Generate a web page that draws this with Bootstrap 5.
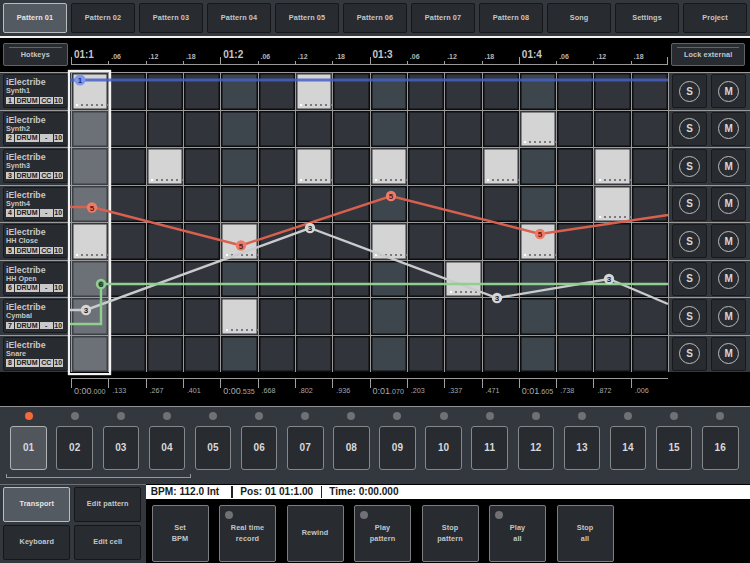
<!DOCTYPE html>
<html lang="en"><head><meta charset="utf-8"><title>Sequencer</title>
<link href="https://cdn.jsdelivr.net/npm/bootstrap@5.3.0/dist/css/bootstrap.min.css" rel="stylesheet">
<style>
html,body{margin:0;width:750px;height:563px;overflow:hidden;background:#000;font-family:"Liberation Sans",Arial,sans-serif}
.app{width:750px;height:563px;overflow:hidden}
.hw{--bs-btn-padding-x:0;--bs-btn-padding-y:0;--bs-btn-font-size:7.3px;--bs-btn-font-weight:700;--bs-btn-line-height:10.5px;--bs-btn-color:#c4c6c8;--bs-btn-bg:#282b30;--bs-btn-border-color:#15171a;--bs-btn-border-radius:2px;--bs-btn-hover-color:#c4c6c8;--bs-btn-hover-bg:#282b30;--bs-btn-hover-border-color:#15171a;letter-spacing:.1px}
.hw.lit{--bs-btn-color:#e6e6e6;--bs-btn-bg:#545a61;--bs-btn-border-color:#b9bcbf;--bs-btn-hover-bg:#545a61;--bs-btn-hover-border-color:#b9bcbf;--bs-btn-hover-color:#e6e6e6}
.tabs{height:36px;background:#33373e;padding:3px;gap:4px}
.tabs .hw{width:64px;height:30px}
.wline{height:2px;background:#f2f2f2}
.trk{display:grid;grid-template-columns:70.9px repeat(16,37.34px) 81.66px}
.rul{height:34px;background:#000}
.tk{height:27px;border-bottom:1px solid #9a9a9a;align-self:start;color:#b5b5b5;font-size:7px;font-weight:700;padding:14px 0 0 3px;line-height:9px;position:relative}
.tk.maj{font-size:10px;color:#c6c6c6;padding-top:11px;padding-left:3px;line-height:11px}
.tk::before{content:"";position:absolute;left:0;bottom:0;height:3px;width:1px;background:#a0a0a0}
.tk.maj::before{height:7px}
.tk.end::after{content:"";position:absolute;right:0;bottom:0;height:7px;width:1px;background:#a0a0a0}
.holdb{padding:4px 0 0 3px}
.holdb .hw{width:64.5px;height:23px;position:relative}
.holdl{padding:4px 0 0 3px}
.holdl .hw{width:74px;height:23px;position:relative}
.hw .gl{position:absolute;left:5px;right:5px;top:3px;height:1px;background:#62666b}
.hw.slim{--bs-btn-border-color:#5f6368;--bs-btn-hover-border-color:#5f6368}
.lane{height:37.5px;border-top:1px solid #9a9a9a;background:#33373e}
.tcard{padding:1px 3px}
.tbox{height:34px;background:#282b30;border:1px solid #17191c;border-radius:2px;padding:2px 0 0 2px;color:#c4c6c8;font-weight:700;line-height:1}
.tname{font-size:8.8px;line-height:10px}
.tsub{font-size:7.2px;line-height:8.5px}
.tags{gap:1px;margin-top:1px}
.tags span{background:#c9c9c9;color:#1b1b1b;font-size:7px;height:7.5px;line-height:7.6px;text-align:center;display:block}
.t1{width:8px}.t2{width:24px}.t3{width:12.5px}.t4{width:9.5px}
.cel{border-left:1px solid #9a9a9a;box-shadow:inset 0 0 0 1.5px #0c0d0f;background:#31343a;position:relative}
.cel.beat{background:#3d454d}
.cel.sel{background:#6c7178;box-shadow:inset 0 0 0 1.5px #3c3f43}
.cel.on{background:#d4d4d4;box-shadow:inset 0 0 0 1.5px #35373b}
.cel.on::after{content:"";position:absolute;left:9.5px;top:30.5px;width:27px;height:2px;background:repeating-linear-gradient(90deg,#77797c 0 2px,transparent 2px 5px)}
.cel.on::before{content:"";position:absolute;left:4.5px;top:30.5px;width:2px;height:2px;background:#fff}
.sm{border-left:1px solid #9a9a9a;padding:1px 3px;gap:4px}
.sm div{width:35px;height:34px;background:#282b30;border:1px solid #17191c;border-radius:2px}
.sm span{width:21px;height:21px;border:1px solid #bcbcbc;border-radius:50%;color:#d6d6d6;font-size:10px;font-weight:700;line-height:19px;text-align:center;display:block}
.frame{position:absolute;left:68px;top:69.5px;width:43px;height:305px;border:2.5px solid #f2f2f2;box-shadow:0 0 1px #fff;pointer-events:none}
.over{position:absolute;left:0;top:0}
.over text{font:700 8px "Liberation Sans",Arial,sans-serif;text-anchor:middle}
.bru{height:34px;background:#000}
.bt{margin-top:6px;height:28px;border-top:1px solid #9a9a9a;color:#a8a8a8;font-size:7.2px;padding:7px 0 0 4px;line-height:10px;position:relative;white-space:nowrap}
.bt::before{content:"";position:absolute;left:0;top:0;height:9px;width:1px;background:#a0a0a0}
.bt.maj{padding-left:3px}
.bt u{text-decoration:none;font-size:9px}
.steps{height:78px;border-top:1px solid #8f9195;background:#33373e;padding:5px 0 0 10.3px}
.pads{display:grid;grid-template-columns:repeat(16,36.6px);column-gap:9.53px}
.led{width:8px;height:8px;border-radius:50%;background:#6f7174;display:block;margin:0 auto}
.led.hot{background:#f4693a}
.pads .hw{width:36.6px;height:44px;margin-top:6px;--bs-btn-font-size:10px;--bs-btn-border-color:#85888b;--bs-btn-hover-border-color:#85888b;--bs-btn-color:#d8d8d8;--bs-btn-hover-color:#d8d8d8;border-radius:3px}
.pads .hw.lit{--bs-btn-border-color:#b0b3b6;--bs-btn-hover-border-color:#b0b3b6;--bs-btn-bg:#50565c;--bs-btn-hover-bg:#50565c}
.brace{width:185px;height:4px;margin:4px 0 0 -4.8px;border:1px solid #96989b;border-top:0}
.low{height:79px}
.side{width:145.5px;background:#33373e;border-top:1px solid #6d7075;padding:2px 0 0 3.3px;display:grid;grid-template-columns:67px 67.5px;grid-template-rows:34.5px 34.5px;column-gap:3.7px;row-gap:3.5px;align-content:start}
.stat{height:14px;margin-top:.5px;background:#fff;color:#1a1a1a;font-size:10.1px;font-weight:700;line-height:14px;padding-left:5.3px;white-space:nowrap}
.stat i{width:1.5px;height:12px;background:#222;display:block;margin:0 7.5px 0 12px}
.stat i.nx{margin:0 7px 0 7.5px}
.acts{padding:6.5px 0 0 6px;gap:10.5px}
.acts .hw{width:57px;height:57px;position:relative;--bs-btn-border-color:#7b7e81;--bs-btn-hover-border-color:#7b7e81}
.acts .led{position:absolute;left:4.5px;top:5px}
</style></head>
<body>
<div class="app position-relative">
<div class="tabs d-flex">
<button class="btn hw lit">Pattern 01</button><button class="btn hw">Pattern 02</button><button class="btn hw">Pattern 03</button><button class="btn hw">Pattern 04</button><button class="btn hw">Pattern 05</button><button class="btn hw">Pattern 06</button><button class="btn hw">Pattern 07</button><button class="btn hw">Pattern 08</button><button class="btn hw">Song</button><button class="btn hw">Settings</button><button class="btn hw">Project</button>
</div>
<div class="wline"></div>
<div class="trk rul">
<div class="holdb"><button class="btn hw slim"><span class="gl"></span>Hotkeys</button></div>
<div class="tk maj">01:1</div><div class="tk">.06</div><div class="tk">.12</div><div class="tk">.18</div>
<div class="tk maj">01:2</div><div class="tk">.06</div><div class="tk">.12</div><div class="tk">.18</div>
<div class="tk maj">01:3</div><div class="tk">.06</div><div class="tk">.12</div><div class="tk">.18</div>
<div class="tk maj">01:4</div><div class="tk">.06</div><div class="tk">.12</div><div class="tk end">.18</div>
<div class="holdl"><button class="btn hw slim"><span class="gl"></span>Lock external</button></div>
</div>

<div class="trk lane"><div class="tcard"><div class="tbox"><div class="tname">iElectribe</div><div class="tsub">Synth1</div><div class="tags d-flex"><span class="t1">1</span><span class="t2">DRUM</span><span class="t3">CC</span><span class="t4">10</span></div></div></div>
<div class="cel on"></div><div class="cel"></div><div class="cel"></div><div class="cel"></div><div class="cel beat"></div><div class="cel"></div><div class="cel on"></div><div class="cel"></div><div class="cel beat"></div><div class="cel"></div><div class="cel"></div><div class="cel"></div><div class="cel beat"></div><div class="cel"></div><div class="cel"></div><div class="cel"></div>
<div class="sm d-flex"><div class="d-flex align-items-center justify-content-center"><span>S</span></div><div class="d-flex align-items-center justify-content-center"><span>M</span></div></div></div>

<div class="trk lane"><div class="tcard"><div class="tbox"><div class="tname">iElectribe</div><div class="tsub">Synth2</div><div class="tags d-flex"><span class="t1">2</span><span class="t2">DRUM</span><span class="t3">-</span><span class="t4">10</span></div></div></div>
<div class="cel sel"></div><div class="cel"></div><div class="cel"></div><div class="cel"></div><div class="cel beat"></div><div class="cel"></div><div class="cel"></div><div class="cel"></div><div class="cel beat"></div><div class="cel"></div><div class="cel"></div><div class="cel"></div><div class="cel on"></div><div class="cel"></div><div class="cel"></div><div class="cel"></div>
<div class="sm d-flex"><div class="d-flex align-items-center justify-content-center"><span>S</span></div><div class="d-flex align-items-center justify-content-center"><span>M</span></div></div></div>

<div class="trk lane"><div class="tcard"><div class="tbox"><div class="tname">iElectribe</div><div class="tsub">Synth3</div><div class="tags d-flex"><span class="t1">3</span><span class="t2">DRUM</span><span class="t3">CC</span><span class="t4">10</span></div></div></div>
<div class="cel sel"></div><div class="cel"></div><div class="cel on"></div><div class="cel"></div><div class="cel beat"></div><div class="cel"></div><div class="cel on"></div><div class="cel"></div><div class="cel on"></div><div class="cel"></div><div class="cel"></div><div class="cel on"></div><div class="cel beat"></div><div class="cel"></div><div class="cel on"></div><div class="cel"></div>
<div class="sm d-flex"><div class="d-flex align-items-center justify-content-center"><span>S</span></div><div class="d-flex align-items-center justify-content-center"><span>M</span></div></div></div>

<div class="trk lane"><div class="tcard"><div class="tbox"><div class="tname">iElectribe</div><div class="tsub">Synth4</div><div class="tags d-flex"><span class="t1">4</span><span class="t2">DRUM</span><span class="t3">-</span><span class="t4">10</span></div></div></div>
<div class="cel sel"></div><div class="cel"></div><div class="cel"></div><div class="cel"></div><div class="cel beat"></div><div class="cel"></div><div class="cel"></div><div class="cel"></div><div class="cel beat"></div><div class="cel"></div><div class="cel"></div><div class="cel"></div><div class="cel beat"></div><div class="cel"></div><div class="cel on"></div><div class="cel"></div>
<div class="sm d-flex"><div class="d-flex align-items-center justify-content-center"><span>S</span></div><div class="d-flex align-items-center justify-content-center"><span>M</span></div></div></div>

<div class="trk lane"><div class="tcard"><div class="tbox"><div class="tname">iElectribe</div><div class="tsub">HH Close</div><div class="tags d-flex"><span class="t1">5</span><span class="t2">DRUM</span><span class="t3">CC</span><span class="t4">10</span></div></div></div>
<div class="cel on"></div><div class="cel"></div><div class="cel"></div><div class="cel"></div><div class="cel on"></div><div class="cel"></div><div class="cel"></div><div class="cel"></div><div class="cel on"></div><div class="cel"></div><div class="cel"></div><div class="cel"></div><div class="cel on"></div><div class="cel"></div><div class="cel"></div><div class="cel"></div>
<div class="sm d-flex"><div class="d-flex align-items-center justify-content-center"><span>S</span></div><div class="d-flex align-items-center justify-content-center"><span>M</span></div></div></div>

<div class="trk lane"><div class="tcard"><div class="tbox"><div class="tname">iElectribe</div><div class="tsub">HH Open</div><div class="tags d-flex"><span class="t1">6</span><span class="t2">DRUM</span><span class="t3">-</span><span class="t4">10</span></div></div></div>
<div class="cel sel"></div><div class="cel"></div><div class="cel"></div><div class="cel"></div><div class="cel beat"></div><div class="cel"></div><div class="cel"></div><div class="cel"></div><div class="cel beat"></div><div class="cel"></div><div class="cel on"></div><div class="cel"></div><div class="cel beat"></div><div class="cel"></div><div class="cel"></div><div class="cel"></div>
<div class="sm d-flex"><div class="d-flex align-items-center justify-content-center"><span>S</span></div><div class="d-flex align-items-center justify-content-center"><span>M</span></div></div></div>

<div class="trk lane"><div class="tcard"><div class="tbox"><div class="tname">iElectribe</div><div class="tsub">Cymbal</div><div class="tags d-flex"><span class="t1">7</span><span class="t2">DRUM</span><span class="t3">-</span><span class="t4">10</span></div></div></div>
<div class="cel sel"></div><div class="cel"></div><div class="cel"></div><div class="cel"></div><div class="cel on"></div><div class="cel"></div><div class="cel"></div><div class="cel"></div><div class="cel beat"></div><div class="cel"></div><div class="cel"></div><div class="cel"></div><div class="cel beat"></div><div class="cel"></div><div class="cel"></div><div class="cel"></div>
<div class="sm d-flex"><div class="d-flex align-items-center justify-content-center"><span>S</span></div><div class="d-flex align-items-center justify-content-center"><span>M</span></div></div></div>

<div class="trk lane"><div class="tcard"><div class="tbox"><div class="tname">iElectribe</div><div class="tsub">Snare</div><div class="tags d-flex"><span class="t1">8</span><span class="t2">DRUM</span><span class="t3">CC</span><span class="t4">10</span></div></div></div>
<div class="cel sel"></div><div class="cel"></div><div class="cel"></div><div class="cel"></div><div class="cel beat"></div><div class="cel"></div><div class="cel"></div><div class="cel"></div><div class="cel beat"></div><div class="cel"></div><div class="cel"></div><div class="cel"></div><div class="cel beat"></div><div class="cel"></div><div class="cel"></div><div class="cel"></div>
<div class="sm d-flex"><div class="d-flex align-items-center justify-content-center"><span>S</span></div><div class="d-flex align-items-center justify-content-center"><span>M</span></div></div></div>

<div class="trk bru"><div></div>
<div class="bt maj"><u>0:00</u>.000</div><div class="bt">.133</div><div class="bt">.267</div><div class="bt">.401</div>
<div class="bt maj"><u>0:00</u>.535</div><div class="bt">.668</div><div class="bt">.802</div><div class="bt">.936</div>
<div class="bt maj"><u>0:01</u>.070</div><div class="bt">.203</div><div class="bt">.337</div><div class="bt">.471</div>
<div class="bt maj"><u>0:01</u>.605</div><div class="bt">.738</div><div class="bt">.872</div><div class="bt">.006</div>
<div></div></div>

<div class="steps">
<div class="pads">
<div><span class="led hot"></span><button class="btn hw lit">01</button></div><div><span class="led"></span><button class="btn hw">02</button></div><div><span class="led"></span><button class="btn hw">03</button></div><div><span class="led"></span><button class="btn hw">04</button></div><div><span class="led"></span><button class="btn hw">05</button></div><div><span class="led"></span><button class="btn hw">06</button></div><div><span class="led"></span><button class="btn hw">07</button></div><div><span class="led"></span><button class="btn hw">08</button></div><div><span class="led"></span><button class="btn hw">09</button></div><div><span class="led"></span><button class="btn hw">10</button></div><div><span class="led"></span><button class="btn hw">11</button></div><div><span class="led"></span><button class="btn hw">12</button></div><div><span class="led"></span><button class="btn hw">13</button></div><div><span class="led"></span><button class="btn hw">14</button></div><div><span class="led"></span><button class="btn hw">15</button></div><div><span class="led"></span><button class="btn hw">16</button></div>
</div>
<div class="brace"></div>
</div>

<div class="low d-flex">
<div class="side">
<button class="btn hw lit">Transport</button><button class="btn hw">Edit pattern</button><button class="btn hw">Keyboard</button><button class="btn hw">Edit cell</button>
</div>
<div class="flex-grow-1">
<div class="stat d-flex align-items-center"><span>BPM: 112.0 Int</span><i></i><span>Pos: 01 01:1.00</span><i class="nx"></i><span>Time: 0:00.000</span></div>
<div class="acts d-flex">
<button class="btn hw">Set<br>BPM</button>
<button class="btn hw"><span class="led"></span>Real time<br>record</button>
<button class="btn hw">Rewind</button>
<button class="btn hw"><span class="led"></span>Play<br>pattern</button>
<button class="btn hw">Stop<br>pattern</button>
<button class="btn hw"><span class="led"></span>Play<br>all</button>
<button class="btn hw">Stop<br>all</button>
</div>
</div>
</div>

<div class="frame"></div>
<svg class="over" width="750" height="563" viewBox="0 0 750 563">
<polyline points="70,80 668,80" fill="none" stroke="#4460c4" stroke-width="3" stroke-opacity=".85"/>
<polyline points="70,207 92,207 241,245.5 391,196 540,234 668,215" fill="none" stroke="#d8604f" stroke-width="2.4"/>
<polyline points="70,310 86,310 310,228 497,298 609,279 668,304" fill="none" stroke="#c9cbcd" stroke-width="2.4"/>
<polyline points="70,324 101,324 101,284 668,284" fill="none" stroke="#90cf90" stroke-width="2.4"/>
<circle cx="80" cy="80" r="5.5" fill="#7f98ee"/><text x="80" y="83" fill="#1f2f6a">1</text>
<g fill="#ef7a68"><circle cx="92" cy="207.5" r="5.2"/><circle cx="241" cy="245.5" r="5.2"/><circle cx="391" cy="196" r="5.2"/><circle cx="540" cy="234" r="5.2"/></g>
<g fill="#5a1a10"><text x="92" y="210.5">5</text><text x="241" y="248.5">5</text><text x="391" y="199">5</text><text x="540" y="237">5</text></g>
<g fill="#d4d5d6"><circle cx="86" cy="310" r="5.2"/><circle cx="310" cy="228" r="5.2"/><circle cx="497" cy="298" r="5.2"/><circle cx="609" cy="279" r="5.2"/></g>
<g fill="#222"><text x="86" y="313">3</text><text x="310" y="231">3</text><text x="497" y="301">3</text><text x="609" y="282">3</text></g>
<circle cx="101" cy="284" r="4" fill="#5f7a62" stroke="#90cf90" stroke-width="2.4"/><text x="101" y="287" fill="#12301a">6</text>
</svg>
</div>
</body></html>
